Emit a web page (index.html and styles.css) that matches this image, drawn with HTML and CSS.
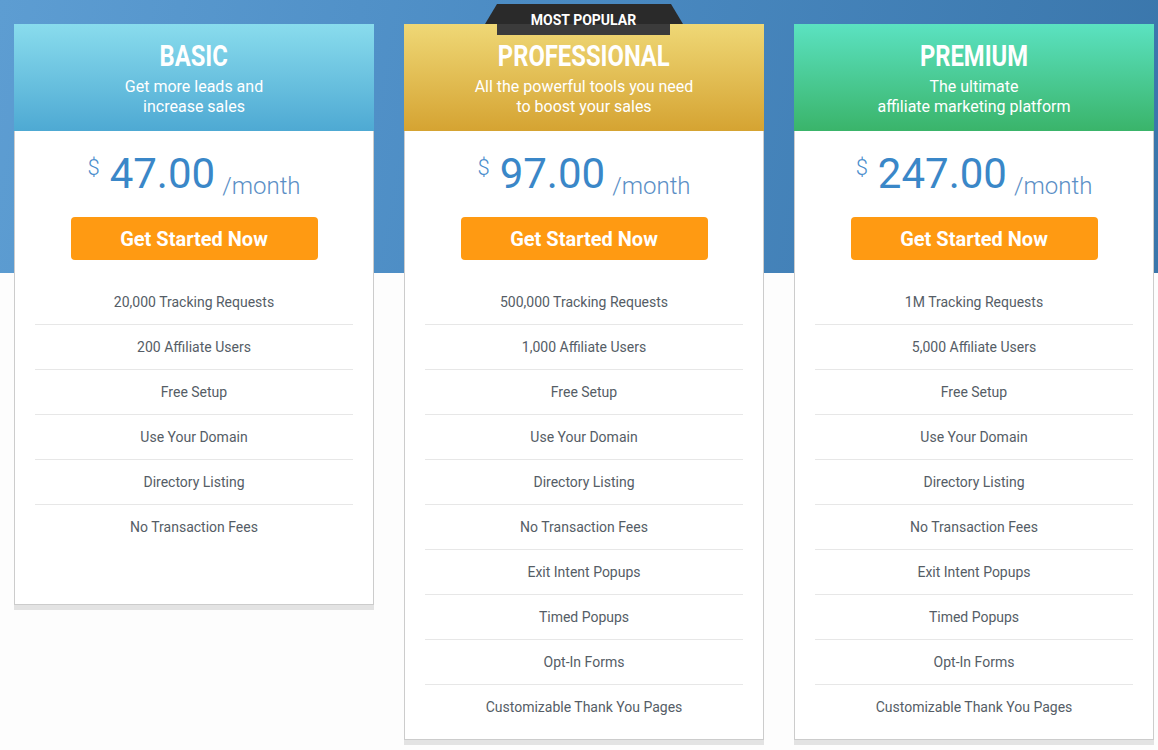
FILE: index.html
```html
<!DOCTYPE html>
<html lang="en">
<head>
<meta charset="utf-8">
<title>Pricing</title>
<link rel="stylesheet" href="styles.css">
</head>
<body>
<main class="pricing">
  <section class="plan plan--short">
    <header class="plan__head plan__head--basic">
      <h2 class="plan__title"><span>BASIC</span></h2>
      <p class="plan__sub">Get more leads and<br>increase sales</p>
    </header>
    <div class="plan__body">
      <div class="price"><span class="price__cur">$</span><span class="price__num">47.00</span><span class="price__per">/month</span></div>
      <a class="btn" href="#">Get Started Now</a>
      <ul class="features">
        <li>20,000 Tracking Requests</li>
        <li>200 Affiliate Users</li>
        <li>Free Setup</li>
        <li>Use Your Domain</li>
        <li>Directory Listing</li>
        <li>No Transaction Fees</li>
      </ul>
    </div>
  </section>

  <section class="plan">
    <div class="badge">MOST POPULAR</div>
    <header class="plan__head plan__head--pro">
      <h2 class="plan__title"><span>PROFESSIONAL</span></h2>
      <p class="plan__sub">All the powerful tools you need<br>to boost your sales</p>
    </header>
    <div class="plan__body">
      <div class="price"><span class="price__cur">$</span><span class="price__num">97.00</span><span class="price__per">/month</span></div>
      <a class="btn" href="#">Get Started Now</a>
      <ul class="features">
        <li>500,000 Tracking Requests</li>
        <li>1,000 Affiliate Users</li>
        <li>Free Setup</li>
        <li>Use Your Domain</li>
        <li>Directory Listing</li>
        <li>No Transaction Fees</li>
        <li>Exit Intent Popups</li>
        <li>Timed Popups</li>
        <li>Opt-In Forms</li>
        <li>Customizable Thank You Pages</li>
      </ul>
    </div>
  </section>

  <section class="plan">
    <header class="plan__head plan__head--premium">
      <h2 class="plan__title"><span>PREMIUM</span></h2>
      <p class="plan__sub">The ultimate<br>affiliate marketing platform</p>
    </header>
    <div class="plan__body">
      <div class="price"><span class="price__cur">$</span><span class="price__num">247.00</span><span class="price__per">/month</span></div>
      <a class="btn" href="#">Get Started Now</a>
      <ul class="features">
        <li>1M Tracking Requests</li>
        <li>5,000 Affiliate Users</li>
        <li>Free Setup</li>
        <li>Use Your Domain</li>
        <li>Directory Listing</li>
        <li>No Transaction Fees</li>
        <li>Exit Intent Popups</li>
        <li>Timed Popups</li>
        <li>Opt-In Forms</li>
        <li>Customizable Thank You Pages</li>
      </ul>
    </div>
  </section>
</main>
</body>
</html>
```

FILE: styles.css
```css
* { box-sizing: border-box; }

html, body {
  margin: 0;
  padding: 0;
}

body {
  font-family: Roboto, "Liberation Sans", Arial, sans-serif;
  background:
    linear-gradient(100deg, #5d9dd2 0%, #4b8bc3 45%, #3a76ab 100%) top left / 100% 273px no-repeat,
    #fdfdfd;
  min-height: 750px;
}

.pricing {
  display: flex;
  align-items: flex-start;
  gap: 30px;
  padding: 24px 0 0 14px;
}

.plan {
  position: relative;
  width: 360px;
  flex: 0 0 360px;
  box-shadow: 0 5px 0 #e3e3e3;
}

.plan__head {
  height: 107px;
  padding-top: 16px;
  text-align: center;
  color: #fff;
}

.plan__head--basic { background: linear-gradient(#89dced, #4ea9d3); }
.plan__head--pro { background: linear-gradient(#efd876, #d5a332); }
.plan__head--premium { background: linear-gradient(#5be2c1, #3ab46a); }

.plan__title {
  margin: 0;
  font-size: 29px;
  line-height: 32px;
  font-weight: 700;
}

.plan__title span {
  display: inline-block;
  transform: scaleX(0.82);
}

.plan__sub {
  margin: 5px 0 0;
  font-size: 16px;
  line-height: 20px;
  font-weight: 400;
}

.plan__body {
  background: #fff;
  border: 1px solid #cccccc;
  border-top: none;
  padding: 11px 20px 10px;
}

.plan--short .plan__body { padding-bottom: 55px; }

.price {
  text-align: center;
  line-height: 52px;
  height: 52px;
  white-space: nowrap;
}

.price__cur {
  font-size: 22px;
  font-weight: 300;
  color: #4a8dcc;
  vertical-align: 13px;
  margin-right: 10px;
}

.price__num {
  font-size: 42px;
  font-weight: 400;
  color: #3a87c8;
}

.price__per {
  font-size: 24px;
  font-weight: 300;
  color: #5b8fc6;
  vertical-align: -6px;
  margin-left: 7px;
}

.btn {
  display: block;
  width: 247px;
  height: 43px;
  margin: 23px auto 0;
  padding-top: 1px;
  background: #ff9a12;
  border-radius: 4px;
  color: #fff;
  font-size: 20px;
  font-weight: 700;
  line-height: 42px;
  text-align: center;
  text-decoration: none;
}

.features {
  list-style: none;
  margin: 20px 0 0;
  padding: 0;
}

.features li {
  height: 45px;
  line-height: 44px;
  border-bottom: 1px solid #e7e7e7;
  text-align: center;
  font-size: 14px;
  color: #555d66;
}

.features li:last-child { border-bottom: none; height: 44px; }

.badge {
  position: absolute;
  top: -20px;
  left: 93px;
  width: 173px;
  height: 31px;
  background: #3b3b3b;
  color: #fff;
  font-size: 14px;
  font-weight: 700;
  line-height: 32px;
  text-align: center;
  z-index: 2;
}

.badge::before {
  content: "";
  position: absolute;
  left: -12px;
  top: 0;
  width: 198px;
  height: 20px;
  background: #2a2a2a;
  clip-path: polygon(12px 0, 186px 0, 198px 100%, 0 100%);
  z-index: -1;
}
```
